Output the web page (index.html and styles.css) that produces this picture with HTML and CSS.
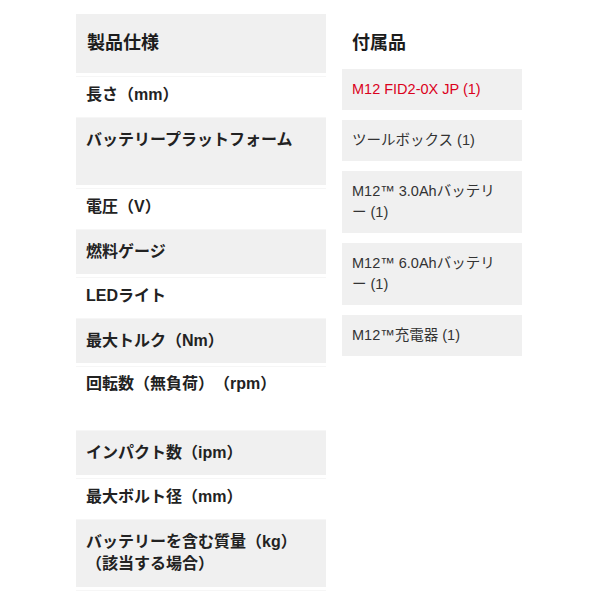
FILE: index.html
```html
<!DOCTYPE html>
<html lang="ja">
<head>
<meta charset="utf-8">
<link rel="stylesheet" href="styles.css">
</head>
<body>
<div class="page">
  <div class="specs">
    <div class="row"><div class="cell head">製品仕様</div></div>
    <div class="row"><div class="cell plain">長さ（mm）</div></div>
    <div class="row"><div class="cell shade tall">バッテリープラットフォーム</div></div>
    <div class="row"><div class="cell plain">電圧（V）</div></div>
    <div class="row"><div class="cell shade">燃料ゲージ</div></div>
    <div class="row"><div class="cell plain">LEDライト</div></div>
    <div class="row"><div class="cell shade">最大トルク（Nm）</div></div>
    <div class="row"><div class="cell plain mid">回転数（無負荷）　（rpm）</div></div>
    <div class="row"><div class="cell shade">インパクト数（ipm）</div></div>
    <div class="row"><div class="cell plain">最大ボルト径（mm）</div></div>
    <div class="row"><div class="cell shade tall">バッテリーを含む質量（kg）<br>（該当する場合）</div></div>
  </div>
  <div class="parts">
    <div class="parts-head">付属品</div>
    <div class="item accent">M12 FID2-0X JP (1)</div>
    <div class="item">ツールボックス (1)</div>
    <div class="item">M12™ 3.0Ahバッテリー (1)</div>
    <div class="item">M12™ 6.0Ahバッテリー (1)</div>
    <div class="item">M12™充電器 (1)</div>
  </div>
</div>
</body>
</html>
```

FILE: styles.css
```css
html, body {
  margin: 0;
  padding: 0;
  background: #ffffff;
}

.page {
  display: flex;
  align-items: flex-start;
  gap: 16px;
  padding: 14px 0 0 76px;
  font-family: "Liberation Sans", "Noto Sans CJK JP", sans-serif;
}

.specs {
  width: 250px;
  display: flex;
  flex-direction: column;
}

.row {
  padding-bottom: 3px;
  border-bottom: 1px solid #f6f6f6;
}

.cell {
  box-sizing: border-box;
  padding: 7px 10px;
  font-size: 16px;
  line-height: 22px;
  font-weight: 700;
  color: #222222;
}

.cell.head {
  height: 59px;
  padding: 18px 11px;
  font-size: 18px;
  background: #f0f0f0;
  color: #1c1c1c;
}

.cell.plain {
  min-height: 37px;
}

.cell.mid {
  min-height: 60px;
  padding-top: 6px;
}

.cell.shade {
  min-height: 44px;
  padding: 11px 10px;
  background: #f0f0f0;
}

.cell.shade.tall {
  min-height: 67px;
}

.parts {
  width: 180px;
  display: flex;
  flex-direction: column;
  gap: 10px;
}

.parts-head {
  height: 45px;
  padding: 18px 10px 0;
  box-sizing: border-box;
  font-size: 18px;
  line-height: 22px;
  font-weight: 700;
  color: #1c1c1c;
}

.item {
  background: #f0f0f0;
  padding: 10px 20px 10px 10px;
  font-size: 14.5px;
  line-height: 21px;
  color: #333333;
}

.item.accent {
  color: #db011c;
}
```
